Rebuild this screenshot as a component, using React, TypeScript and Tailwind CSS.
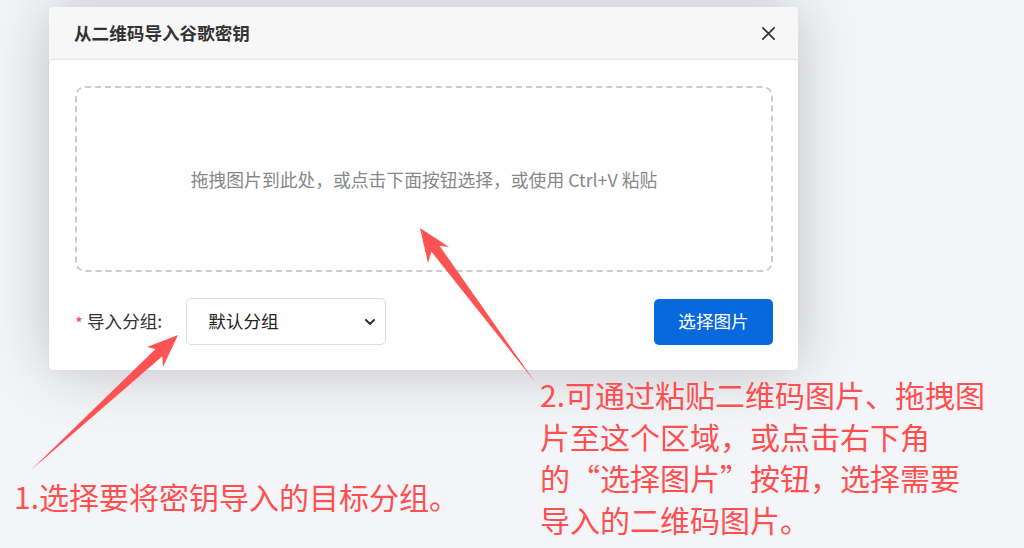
import React from "react";

export default function App() {
  return (
    <div
      className="relative w-full h-[548px] overflow-hidden bg-[#f4f5f9]"
      style={{ fontFamily: '"Noto Sans CJK SC", "Noto Sans", sans-serif' }}
    >
      <div className="pt-[7px] pl-[49px]">
        <div className="w-[749px] rounded-[4px] bg-[#f7f7f7] shadow-[0_0_60px_rgba(0,0,0,0.22)]">
          <div className="h-[53px] flex items-center justify-between pl-[25px] pr-[22px] border-b border-[#ececec]">
            <span className="text-[17.6px] font-bold text-[#333]">从二维码导入谷歌密钥</span>
            <svg width="15" height="15" viewBox="0 0 16 16" className="text-[#333]">
              <path d="M2 2 L14 14 M14 2 L2 14" stroke="currentColor" strokeWidth="1.8" strokeLinecap="round" />
            </svg>
          </div>
          <div className="bg-white rounded-[6px] pt-[26px] pl-[26px] pr-[25px] pb-[25px] shadow-[0_-1px_3px_rgba(0,0,0,0.04)]">
            <div className="h-[186px] rounded-[10px] border-2 border-dashed border-[#cccccc] flex items-center justify-center">
              <span className="text-[17.8px] text-[#888]">拖拽图片到此处，或点击下面按钮选择，或使用 Ctrl+V 粘贴</span>
            </div>
            <div className="mt-[26px] h-[47px] flex items-center justify-between">
              <div className="flex items-center">
                <span className="text-[#f5484d] text-[17px] mr-[4px] mt-[2px]">*</span>
                <span className="text-[17.6px] text-[#333]">导入分组:</span>
                <div className="ml-[24px] w-[200px] h-[47px] border border-[#dcdcdc] rounded-[5px] flex items-center justify-between pl-[21px] pr-[9px]">
                  <span className="text-[17.6px] text-[#222]">默认分组</span>
                  <svg width="12" height="12" viewBox="0 0 12 12">
                    <path d="M2 4 L6 8 L10 4" fill="none" stroke="#333" strokeWidth="2" strokeLinecap="round" strokeLinejoin="round" />
                  </svg>
                </div>
              </div>
              <button className="w-[119px] h-[46px] rounded-[5px] bg-[#0869dc] text-white text-[17.6px]">选择图片</button>
            </div>
          </div>
        </div>
      </div>

      <div className="absolute left-[14px] top-[476px] text-[30px] leading-[41.7px] text-[#ff4f4f] whitespace-nowrap">
        1.选择要将密钥导入的目标分组。
      </div>
      <div className="absolute left-[540px] top-[374px] text-[30px] leading-[41.7px] text-[#ff4f4f] whitespace-nowrap">
        2.可通过粘贴二维码图片、拖拽图
        <br />
        片至这个区域，或点击右下角
        <br />
        的“选择图片”按钮，选择需要
        <br />
        导入的二维码图片。
      </div>

      <svg className="absolute inset-0 pointer-events-none" width="1024" height="548" viewBox="0 0 1024 548">
        <polygon
          points="31,470 155.5,348.9 147,347 178,335 163,367 162.3,356.3"
          fill="#ff5353"
        />
        <polygon
          points="535,382 431.5,251.8 428,263 420,228 449,247 439.5,245.8"
          fill="#ff5353"
        />
      </svg>
    </div>
  );
}
